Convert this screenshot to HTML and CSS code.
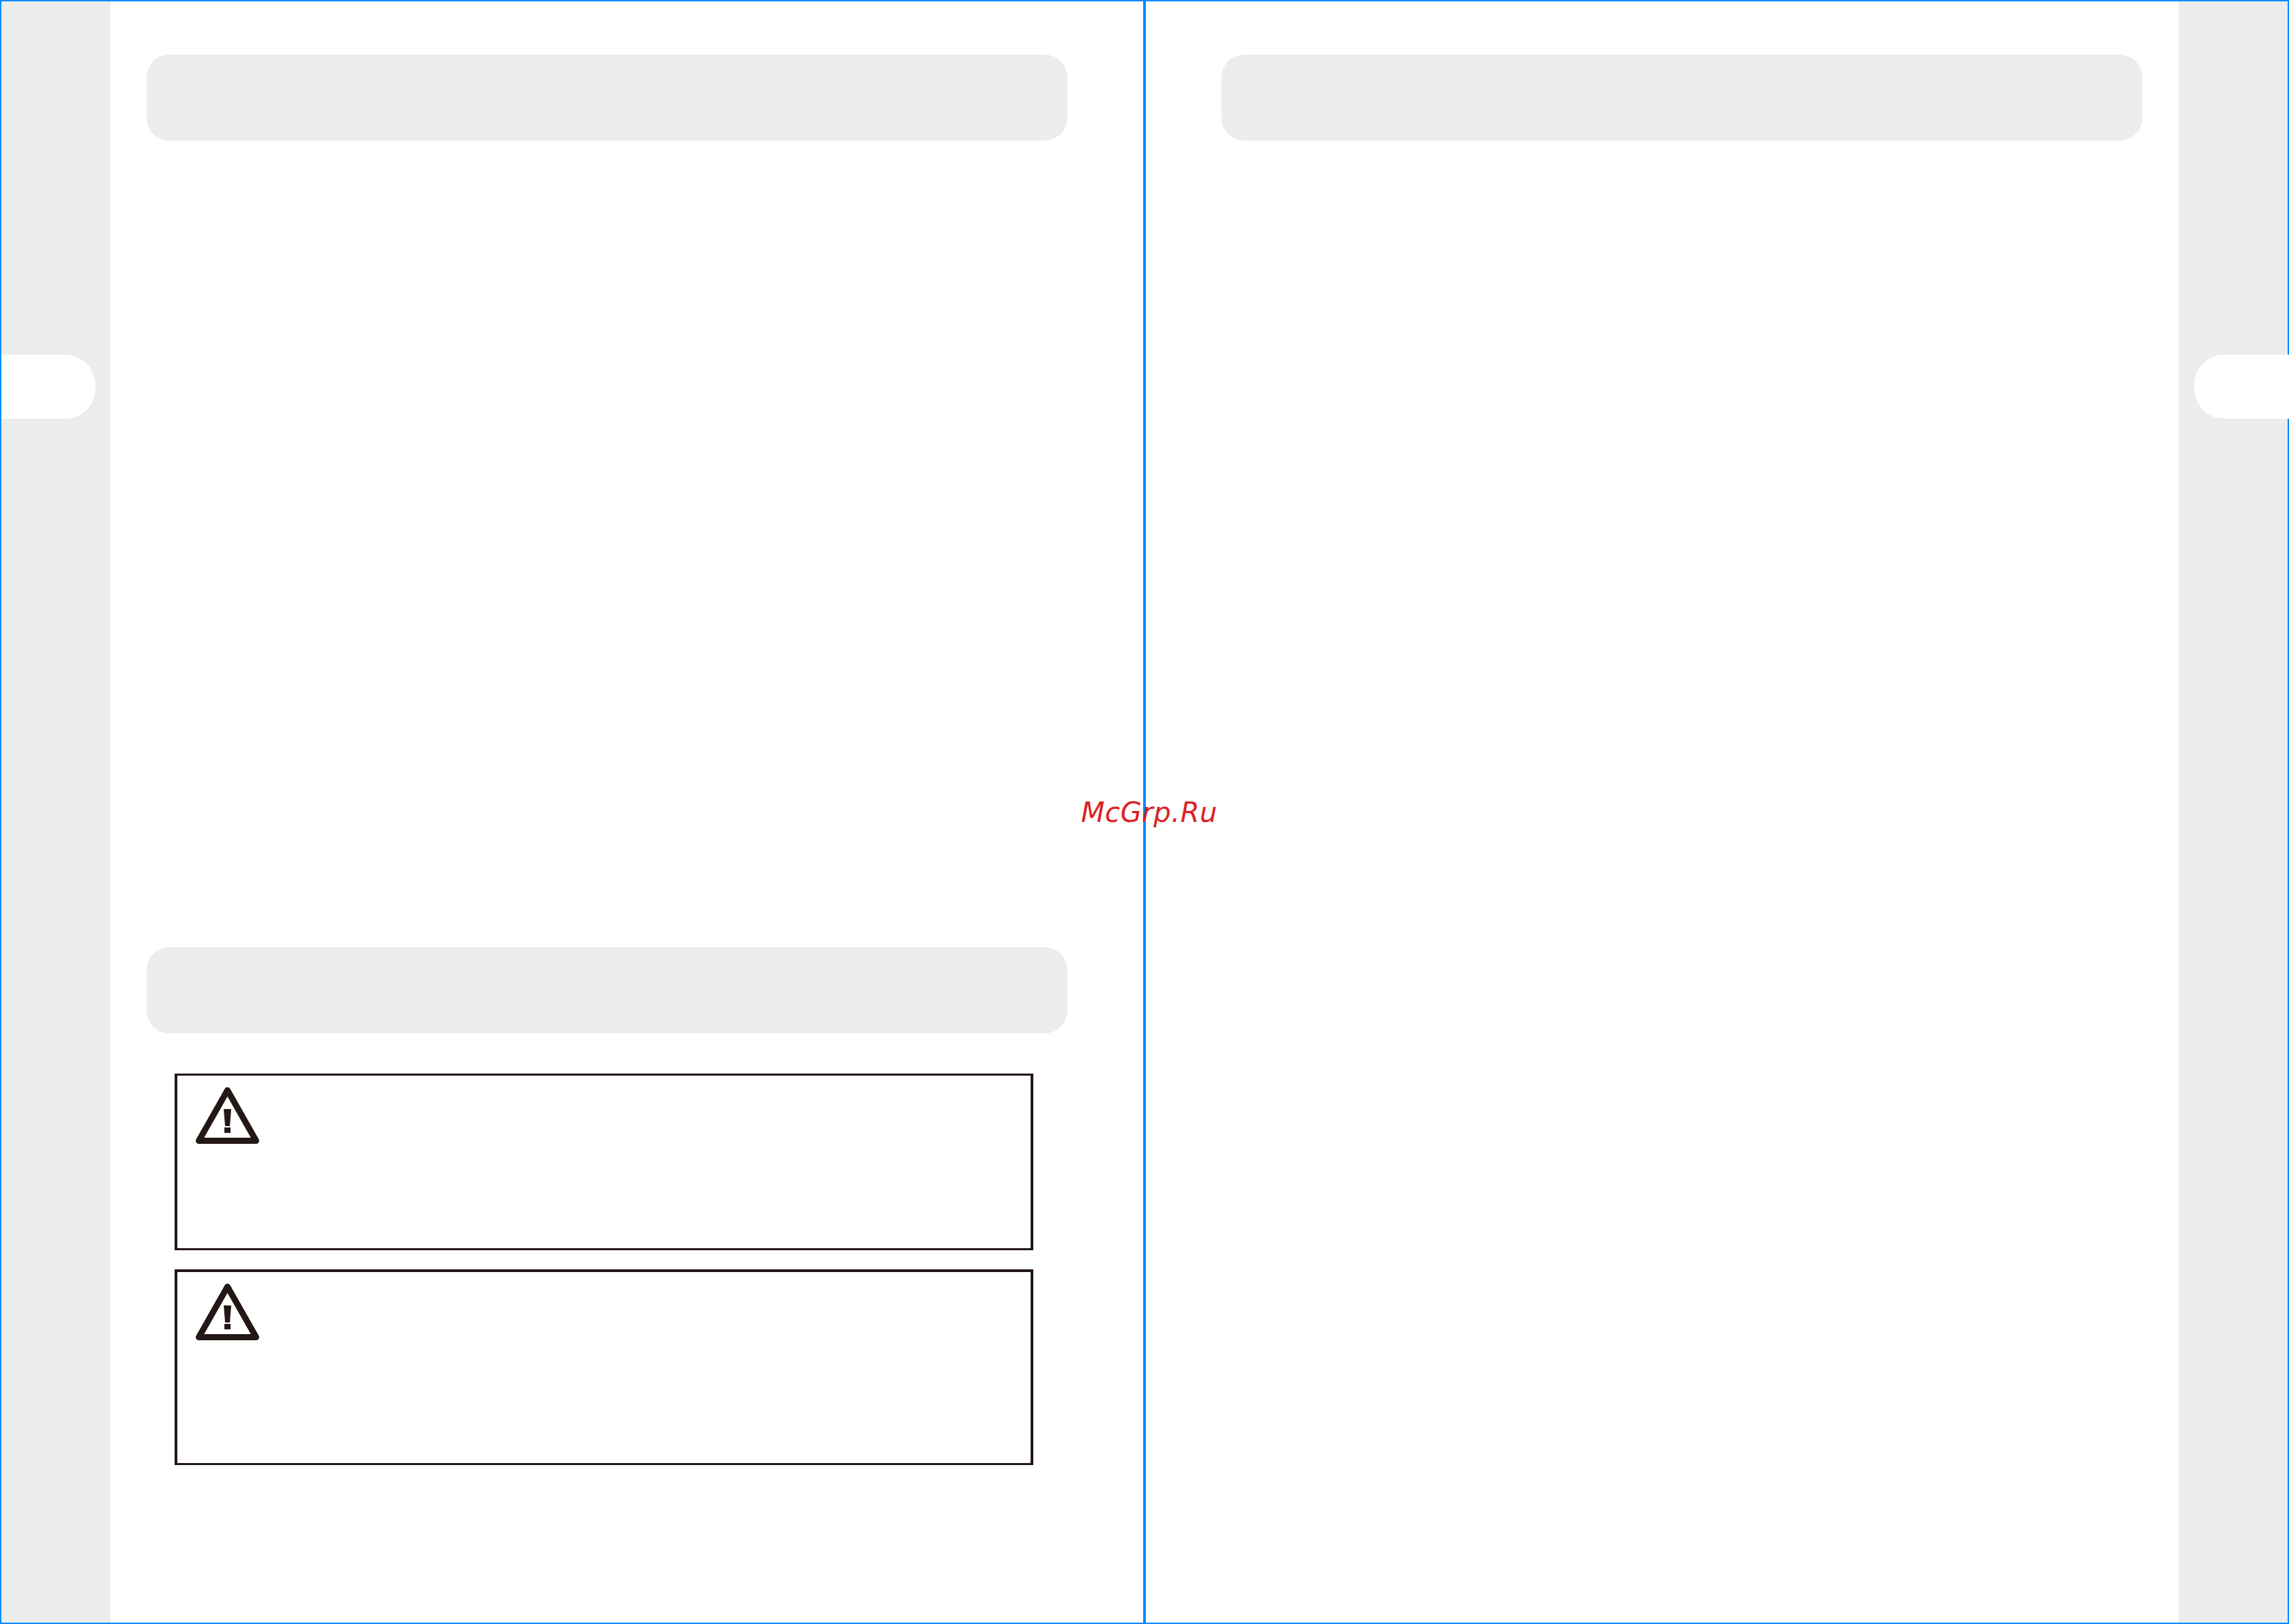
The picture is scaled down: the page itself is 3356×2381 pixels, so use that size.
FILE: index.html
```html
<!DOCTYPE html>
<html lang="ru">
<head>
<meta charset="utf-8">
<title>McGrp.Ru</title>
<link rel="stylesheet" href="styles.css">
</head>
<body>
<div class="spread">
  <section class="page page-left">
    <aside class="rail rail-left"><div class="tab tab-left"></div></aside>
    <main class="content content-left">
      <div class="heading"></div>
      <div class="heading heading-second"></div>
      <div class="notice notice-first">
        <svg class="warn" viewBox="0 0 93 83" aria-hidden="true">
          <path class="warn-outline" d="M46.500 4.500 L4.500 78.500 H88.500 Z"/>
          <path class="warn-mark" d="M41 32 H52 L50 57 H43 Z M42 59 H51 V67 H42 Z"/>
        </svg>
      </div>
      <div class="notice notice-second">
        <svg class="warn" viewBox="0 0 93 83" aria-hidden="true">
          <path class="warn-outline" d="M46.500 4.500 L4.500 78.500 H88.500 Z"/>
          <path class="warn-mark" d="M41 32 H52 L50 57 H43 Z M42 59 H51 V67 H42 Z"/>
        </svg>
      </div>
    </main>
  </section>
  <div class="divider"></div>
  <section class="page page-right">
    <main class="content content-right">
      <div class="heading"></div>
    </main>
    <aside class="rail rail-right"><div class="tab tab-right"></div></aside>
  </section>
  <div class="watermark">McGrp.Ru</div>
</div>
</body>
</html>
```
FILE: styles.css
```css
html, body {
  margin: 0;
  padding: 0;
  background: #fff;
}

.spread {
  position: relative;
  box-sizing: border-box;
  display: flex;
  width: 3356px;
  height: 2381px;
  border: 2px solid #008cff;
}

.page {
  display: flex;
  width: 1674px;
  flex: none;
}

.divider {
  width: 4px;
  flex: none;
  background: #008cff;
}

.rail {
  width: 160px;
  flex: none;
  box-sizing: border-box;
  padding-top: 518px;
  background: #ececec;
}

.tab {
  height: 94px;
  background: #fff;
}

.tab-left {
  width: 138px;
  border-radius: 0 44px 44px 0 / 0 45px 45px 0;
}

.tab-right {
  width: 139px;
  margin-left: 23px;
  border-radius: 44px 0 0 44px / 45px 0 0 45px;
}

.content {
  display: flex;
  flex-direction: column;
  flex: 1;
  padding-top: 78px;
}

.content-left {
  padding-left: 53px;
  padding-right: 111px;
}

.content-right {
  padding-left: 111px;
  padding-right: 53px;
}

.heading {
  height: 126px;
  flex: none;
  background: #ececec;
  border-radius: 33px;
}

.heading-second {
  margin-top: 1183px;
}

.notice {
  box-sizing: border-box;
  width: 1259px;
  margin-left: 41px;
  border: 3px solid #231815;
  border-left-width: 4px;
  border-right-width: 4px;
  padding: 17px 0 0 27px;
}

.notice-first {
  height: 259px;
  margin-top: 59px;
}

.notice-second {
  height: 287px;
  margin-top: 28px;
  border-top-width: 4px;
  padding-top: 17px;
}

.warn {
  display: block;
  width: 93px;
  height: 83px;
}

.warn-outline {
  fill: none;
  stroke: #231815;
  stroke-width: 9;
  stroke-linejoin: round;
}

.warn-mark {
  fill: #231815;
}

.watermark {
  position: absolute;
  left: 1583px;
  top: 1167px;
  font-family: "DejaVu Sans", sans-serif;
  font-style: italic;
  font-size: 40px;
  line-height: 44px;
  letter-spacing: 0.6px;
  color: #d92222;
  white-space: nowrap;
}
```
